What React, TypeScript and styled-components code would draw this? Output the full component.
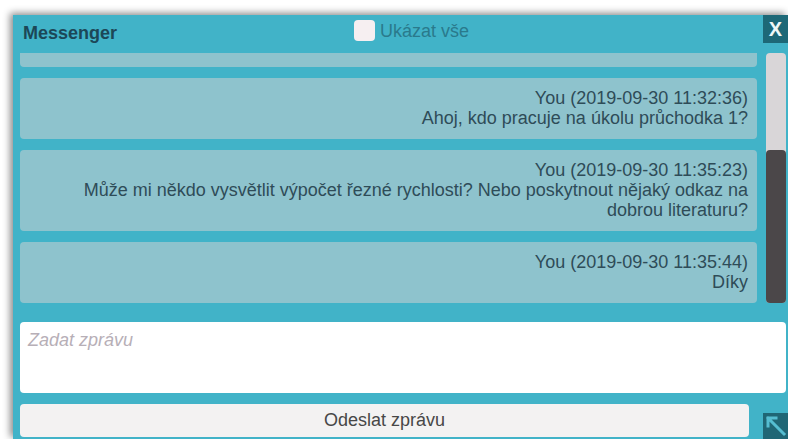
import React from "react";
import styled, { createGlobalStyle } from "styled-components";

const GlobalStyle = createGlobalStyle`
  html, body {
    margin: 0;
    padding: 0;
    background: #ffffff;
    overflow: hidden;
  }
  body {
    font-family: "Liberation Sans", Arial, sans-serif;
  }
`;

const Page = styled.div`
  padding: 15px 0 0 13px;
  height: 439px;
  box-sizing: border-box;
`;

const Panel = styled.section`
  position: relative;
  width: 775px;
  height: 424px;
  background: #41b3c8;
  box-shadow: -3px -2px 7px rgba(0, 0, 0, 0.45);
  display: flex;
  flex-direction: column;
  padding: 0 2px 0 7px;
  box-sizing: border-box;
`;

const Header = styled.header`
  display: grid;
  grid-template-columns: 334px auto 1fr 25px;
  align-items: start;
  height: 38px;
  margin-right: -2px;
`;

const Title = styled.h1`
  margin: 0;
  padding: 8px 0 0 3px;
  font-size: 18px;
  line-height: 20px;
  font-weight: 700;
  color: #1c4757;
`;

const Toggle = styled.label`
  display: flex;
  align-items: center;
  gap: 5px;
  padding-top: 5px;
  font-size: 18px;
  line-height: 20px;
  color: #2a7a8c;
  cursor: pointer;
`;

const Box = styled.span`
  width: 21px;
  height: 21px;
  border-radius: 4px;
  background: #f6eff1;
`;

const CloseButton = styled.button`
  width: 25px;
  height: 28px;
  border: none;
  padding: 0;
  background: #1d6877;
  color: #eef7f8;
  font-family: "Liberation Sans", Arial, sans-serif;
  font-size: 20px;
  font-weight: 700;
  line-height: 28px;
  cursor: pointer;
`;

/* Message area: the history column next to its own scroll track */
const ListRow = styled.div`
  display: flex;
  gap: 9px;
  height: 250px;
`;

const History = styled.div`
  flex: 1;
  min-width: 0;
  display: flex;
  flex-direction: column;
  justify-content: flex-end;
  gap: 11px;
  overflow: hidden;
`;

const Bubble = styled.div<{ $sliver?: boolean }>`
  flex-shrink: 0;
  padding: ${(p) => (p.$sliver ? "0" : "10px 9px 11px")};
  height: ${(p) => (p.$sliver ? "14px" : "auto")};
  border-radius: ${(p) => (p.$sliver ? "0 0 4px 4px" : "4px")};
  background: #8ec3cd;
  color: #2e4c58;
  font-size: 18px;
  line-height: 20px;
  text-align: right;
`;

const Line = styled.div``;

const ScrollTrack = styled.div`
  width: 20px;
  flex-shrink: 0;
  display: flex;
  flex-direction: column;
  justify-content: flex-end;
  background: #d9d6d8;
  border-radius: 4px;
`;

const ScrollThumb = styled.div`
  height: 153px;
  background: #4b4749;
  border-radius: 4px;
`;

const Composer = styled.textarea`
  margin-top: 19px;
  height: 71px;
  padding: 8px 8px;
  box-sizing: border-box;
  border: none;
  border-radius: 4px;
  background: #ffffff;
  resize: none;
  font-family: "Liberation Sans", Arial, sans-serif;
  font-size: 18px;
  line-height: 20px;
  color: #333;
  outline: none;

  &::placeholder {
    color: #b7afb7;
    font-style: italic;
  }
`;

const SendButton = styled.button`
  margin: 11px 37px 0 0;
  height: 33px;
  border: none;
  border-radius: 4px;
  background: #f3f2f2;
  color: #474747;
  font-family: "Liberation Sans", Arial, sans-serif;
  font-size: 18px;
  cursor: pointer;
`;

const ResizeHandle = styled.div`
  position: absolute;
  right: 0;
  bottom: 0;
  width: 25px;
  height: 26px;
  background: #1f6675;
  display: flex;
  justify-content: center;
  padding-top: 2px;
  box-sizing: border-box;
`;

type Message = { author: string; time: string; lines: string[] };

const messages: Message[] = [
  {
    author: "You",
    time: "2019-09-30 11:32:36",
    lines: ["Ahoj, kdo pracuje na úkolu průchodka 1?"],
  },
  {
    author: "You",
    time: "2019-09-30 11:35:23",
    lines: [
      "Může mi někdo vysvětlit výpočet řezné rychlosti? Nebo poskytnout nějaký odkaz na dobrou literaturu?",
    ],
  },
  {
    author: "You",
    time: "2019-09-30 11:35:44",
    lines: ["Díky"],
  },
];

export default function App() {
  return (
    <>
      <GlobalStyle />
      <Page>
        <Panel>
          <Header>
            <Title>Messenger</Title>
            <Toggle>
              <Box />
              Ukázat vše
            </Toggle>
            <span />
            <CloseButton aria-label="Zavřít">X</CloseButton>
          </Header>

          <ListRow>
            <History>
              {/* lower edge of the previous message, scrolled mostly out of view */}
              <Bubble $sliver />
              {messages.map((m) => (
                <Bubble key={m.time}>
                  <Line>
                    {m.author} ({m.time})
                  </Line>
                  {m.lines.map((l, i) => (
                    <Line key={i}>{l}</Line>
                  ))}
                </Bubble>
              ))}
            </History>
            <ScrollTrack>
              <ScrollThumb />
            </ScrollTrack>
          </ListRow>

          <Composer placeholder="Zadat zprávu" />
          <SendButton>Odeslat zprávu</SendButton>

          <ResizeHandle>
            <svg width="22" height="22" viewBox="0 0 22 22" fill="none">
              <path
                d="M3 3 L19 19 M3 3 L3 11 M3 3 L11 3"
                stroke="#55bdd1"
                strokeWidth="3"
                strokeLinecap="square"
              />
            </svg>
          </ResizeHandle>
        </Panel>
      </Page>
    </>
  );
}
